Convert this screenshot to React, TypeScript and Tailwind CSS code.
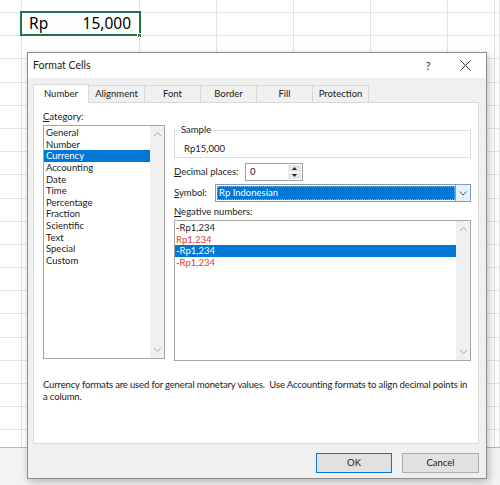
import React from "react";

const COLS = [22, 118, 77, 77, 77, 77, 47, 5];
const ROWS = [13, ...Array(18).fill(23.2), 17.4];

const categories = [
  "General",
  "Number",
  "Currency",
  "Accounting",
  "Date",
  "Time",
  "Percentage",
  "Fraction",
  "Scientific",
  "Text",
  "Special",
  "Custom",
];

const negatives = [
  { text: "-Rp1,234", red: false },
  { text: "Rp1,234", red: true },
  { text: "-Rp1,234", red: false, selected: true },
  { text: "-Rp1,234", red: true },
];

function Chevron({ up }: { up?: boolean }) {
  return (
    <svg width="9" height="6" viewBox="0 0 9 6" className="block">
      <path
        d={up ? "M1 5 L4.5 1.5 L8 5" : "M1 1 L4.5 4.5 L8 1"}
        fill="none"
        stroke="#a6a6a6"
        strokeWidth="1"
      />
    </svg>
  );
}

function ScrollBar() {
  return (
    <div className="w-[14px] h-full bg-[#f0f0f0] flex flex-col justify-between items-center py-[5px]">
      <Chevron up />
      <Chevron />
    </div>
  );
}

function Sheet() {
  return (
    <div className="flex flex-col">
      {ROWS.map((h, r) => (
        <div
          key={r}
          className={`flex ${r === ROWS.length - 1 ? "border-b border-[#b8b8b8]" : "border-b border-[#e2e2e2]"}`}
          style={{ height: h }}
        >
          {COLS.map((w, c) => (
            <div
              key={c}
              className="relative shrink-0 border-r border-[#e2e2e2]"
              style={{ width: w }}
            >
              {r === 1 && c === 1 && (
                <>
                  <div className="h-full flex items-center justify-between pl-[7px] pr-[8px] text-[15.5px] text-black">
                    <span>Rp</span>
                    <span>15,000</span>
                  </div>
                  <div className="absolute -left-[2px] -top-[2px] w-[121px] h-[25px] border-2 border-[#217346]" />
                  <div className="absolute -right-[3px] -bottom-[3px] w-[5px] h-[5px] bg-[#217346] border border-white" />
                </>
              )}
            </div>
          ))}
        </div>
      ))}
      <div className="h-[37px] bg-[#f3f3f3]" />
    </div>
  );
}

function Dialog() {
  return (
    <div className="absolute left-[27px] top-[52px] w-[460px] h-[427px] border border-[#8c8c8c] bg-[#f0f0f0] shadow-[2px_3px_8px_rgba(0,0,0,0.25)] flex flex-col font-['Lato',sans-serif] text-[9.5px] text-[#1a1a1a]">
      {/* TITLE BAR */}
      <div className="h-[25px] bg-white flex items-center pl-[5px] shrink-0">
        <span className="flex-1 text-[10.5px] text-[#222]">Format Cells</span>
        <span className="w-[20px] text-center text-[11.5px] text-[#333] mr-[22px]">?</span>
        <svg width="11" height="11" viewBox="0 0 11 11" className="mr-[15px]">
          <path d="M0.5 0.5 L10.5 10.5 M10.5 0.5 L0.5 10.5" stroke="#333" strokeWidth="1" />
        </svg>
      </div>

      {/* BODY */}
      <div className="flex-1 flex flex-col pl-[5px] pr-[7px] pt-[6px]">
        {/* TABS */}
        <div className="flex h-[18px] shrink-0 relative z-10">
          {["Number", "Alignment", "Font", "Border", "Fill", "Protection"].map((t, i) => (
            <div
              key={t}
              className={`w-[56px] flex items-center justify-center border-t border-r border-[#d9d9d9] ${i === 0 ? "bg-white border-l h-[19px]" : "bg-[#f0f0f0] mt-[1px] h-[17px]"}`}
            >
              {t}
            </div>
          ))}
        </div>

        {/* PANEL */}
        <div className="w-[446px] h-[342px] bg-white border border-[#d9d9d9] pl-[9px] pt-[8px] flex flex-col">
          <div className="flex gap-[9px]">
            {/* CATEGORY */}
            <div className="w-[122px] flex flex-col">
              <div className="h-[12px] leading-[12px] mb-[2px]">
                <span className="underline">C</span>ategory:
              </div>
              <div className="h-[234px] border border-[#a5a5a5] flex">
                <div className="flex-1 flex flex-col pt-[1px]">
                  {categories.map((c) => (
                    <div
                      key={c}
                      className={`h-[11.65px] leading-[11.65px] pl-[2px] ${c === "Currency" ? "bg-[#0078d7] text-white" : ""}`}
                    >
                      {c}
                    </div>
                  ))}
                </div>
                <ScrollBar />
              </div>
            </div>

            {/* RIGHT SIDE */}
            <div className="w-[297px] flex flex-col pt-[19px]">
              {/* SAMPLE */}
              <div className="relative h-[28px] border border-[#dcdcdc] pl-[9px] pt-[12px] leading-[12px]">
                <span className="absolute left-[5px] -top-[7px] bg-white px-[1px] leading-[12px]">Sample</span>
                Rp15,000
              </div>

              {/* DECIMAL */}
              <div className="flex items-center mt-[5px] h-[18px]">
                <div className="w-[71px]">
                  <span className="underline">D</span>ecimal places:
                </div>
                <div className="w-[58px] h-[18px] border border-[#a0a0a0] flex">
                  <div className="flex-1 pl-[4px] leading-[16px]">0</div>
                  <div className="w-[14px] flex flex-col gap-[1px] p-[1px] pl-0">
                    <div className="flex-1 bg-[#e6e6e6] flex items-center justify-center">
                      <svg width="5" height="3" viewBox="0 0 5 3"><path d="M0 3 L2.5 0 L5 3 Z" fill="#222" /></svg>
                    </div>
                    <div className="flex-1 bg-[#e6e6e6] flex items-center justify-center">
                      <svg width="5" height="3" viewBox="0 0 5 3"><path d="M0 0 L2.5 3 L5 0 Z" fill="#222" /></svg>
                    </div>
                  </div>
                </div>
              </div>

              {/* SYMBOL */}
              <div className="flex items-center mt-[3px] h-[18px]">
                <div className="w-[41px]">
                  <span className="underline">S</span>ymbol:
                </div>
                <div className="flex-1 h-[18px] border border-[#7a9ec4] flex p-[1px] pr-0">
                  <div className="flex-1 bg-[#0078d7] text-white pl-[2px] leading-[14px] outline-1 outline-dotted outline-[#7fb4e6] -outline-offset-1">
                    Rp Indonesian
                  </div>
                  <div className="w-[15px] -my-[1px] bg-[#e5f1fb] border-l border-[#7a9ec4] flex items-center justify-center">
                    <svg width="8" height="5" viewBox="0 0 8 5"><path d="M0.5 0.5 L4 4 L7.5 0.5" fill="none" stroke="#555" strokeWidth="1" /></svg>
                  </div>
                </div>
              </div>

              {/* NEGATIVE */}
              <div className="mt-[4px] h-[12px] leading-[12px]">
                <span className="underline">N</span>egative numbers:
              </div>
              <div className="mt-[2px] h-[141px] border border-[#a5a5a5] flex">
                <div className="flex-1 flex flex-col pt-[1px]">
                  {negatives.map((n, i) => (
                    <div
                      key={i}
                      className={`h-[11.65px] leading-[11.65px] pl-[1px] ${n.selected ? "bg-[#0078d7] text-white" : n.red ? "text-[#e03a3a]" : ""}`}
                    >
                      {n.text}
                    </div>
                  ))}
                </div>
                <ScrollBar />
              </div>
            </div>
          </div>

          {/* DESCRIPTION */}
          <p className="mt-[18px] leading-[12px] whitespace-nowrap tracking-[-0.15px]">
            Currency formats are used for general monetary values.&nbsp; Use Accounting formats to align decimal points in
            <br />
            a column.
          </p>
        </div>

        {/* BUTTONS */}
        <div className="flex justify-end gap-[10px] mt-[9px]">
          <button className="w-[76px] h-[20px] bg-[#e1e1e1] border border-[#0078d7] text-[#1a1a1a]">OK</button>
          <button className="w-[77px] h-[20px] bg-[#e1e1e1] border border-[#adadad] text-[#1a1a1a]">Cancel</button>
        </div>
      </div>
    </div>
  );
}

export default function App() {
  return (
    <div className="relative w-[500px] h-[485px] overflow-hidden bg-white font-['Noto_Sans',sans-serif]">
      <Sheet />
      <Dialog />
    </div>
  );
}
